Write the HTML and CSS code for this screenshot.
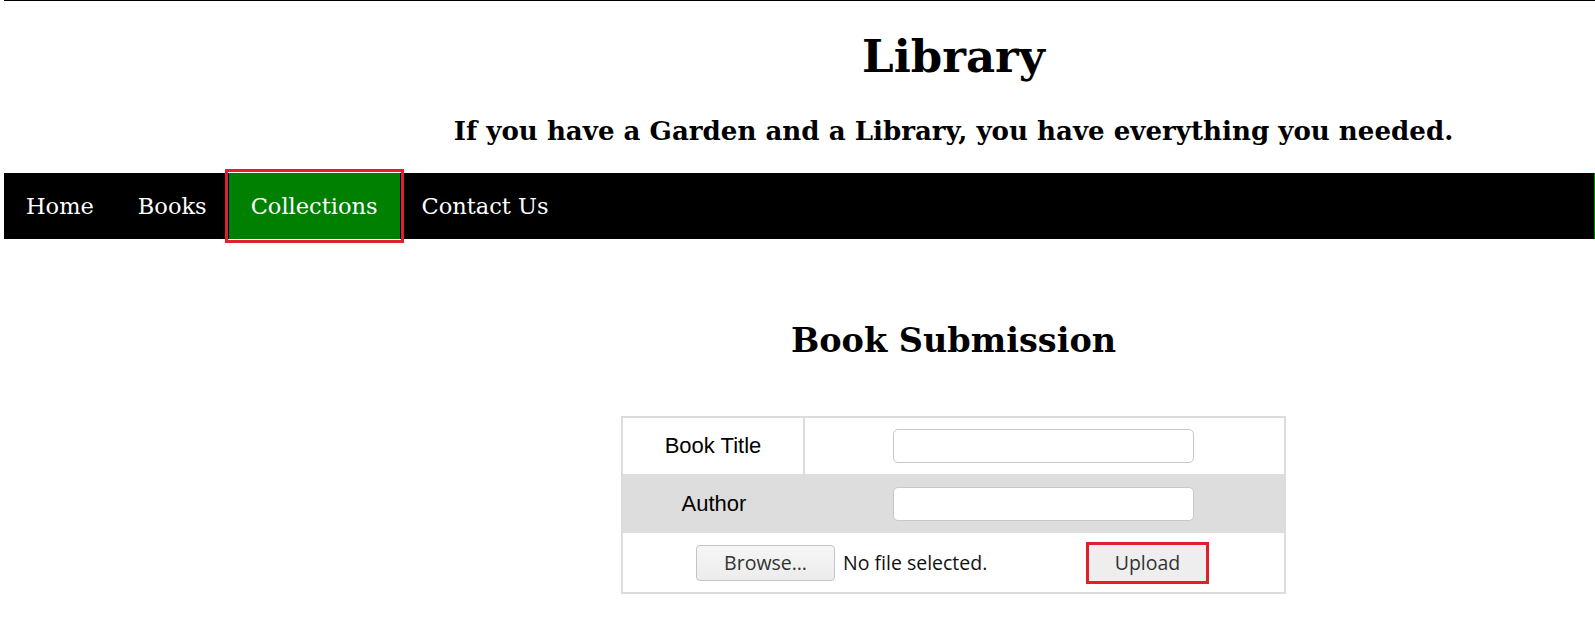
FILE: index.html
```html
<!DOCTYPE html>
<html lang="en">
<head>
<meta charset="utf-8">
<title>Library</title>
<link rel="stylesheet" href="styles.css">
</head>
<body>
<div class="topline"></div>
<header class="header">
  <h1 class="title">Library</h1>
  <h3 class="subtitle">If you have a Garden and a Library, you have everything you needed.</h3>
</header>
<nav class="nav">
  <a class="nav-item" href="#">Home</a>
  <a class="nav-item" href="#">Books</a>
  <a class="nav-item active" href="#">Collections</a>
  <a class="nav-item" href="#">Contact Us</a>
</nav>
<main class="main">
  <h2 class="section-title">Book Submission</h2>
  <form class="form-table">
    <div class="cell label first">Book Title</div>
    <div class="cell field"><input class="text-input" type="text"></div>
    <div class="cell label shaded">Author</div>
    <div class="cell field shaded"><input class="text-input" type="text"></div>
    <div class="cell file-row">
      <span class="file-widget">
        <button type="button" class="browse">Browse…</button>
        <span class="file-label">No file selected.</span>
      </span>
      <button type="button" class="upload">Upload</button>
    </div>
  </form>
</main>
</body>
</html>
```

FILE: styles.css
```css
html, body {
  background: #fff;
}
body {
  margin: 0 0 0 4px;
  font-family: "DejaVu Serif", serif;
  color: #000;
}
.topline {
  margin-left: -4px;
  border-top: 1px solid #000;
}
.header {
  padding-left: 308px;
  text-align: center;
}
.title {
  margin: 29px 0 0;
  font-size: 45px;
  line-height: 54px;
  font-weight: bold;
}
.subtitle {
  margin: 32px 0 0;
  font-size: 26.1px;
  line-height: 30px;
  font-weight: bold;
}
.nav {
  margin-top: 27px;
  height: 66px;
  background: #000;
  border-right: 1px solid #008000;
  display: flex;
}
.nav-item {
  display: block;
  padding: 0 22px;
  line-height: 66px;
  font-size: 22.5px;
  color: #fff;
  text-decoration: none;
}
.nav-item.active {
  background: #008000;
  outline: 3px solid #e2202c;
  outline-offset: 1px;
  position: relative;
}
.main {
  padding-left: 308px;
  text-align: center;
}
.section-title {
  margin: 82px 0 0;
  font-size: 33.5px;
  line-height: 40px;
  font-weight: bold;
}
.form-table {
  margin: 55px auto 0;
  width: 665px;
  box-sizing: border-box;
  border: 2px solid #dcdcdc;
  display: grid;
  grid-template-columns: 182px 1fr;
  grid-template-rows: 56px 59px 59px;
}
.cell {
  display: flex;
  align-items: center;
  justify-content: center;
  font-family: "Liberation Sans", Arial, sans-serif;
  font-size: 22px;
}
.first {
  border-right: 2px solid #dcdcdc;
}
.shaded {
  background: #dddddd;
}
.text-input {
  width: 301px;
  height: 34px;
  box-sizing: border-box;
  border: 1px solid #c8c8c8;
  border-radius: 5px;
  background: #fff;
  margin: 0 0 0 -2px;
}
.file-row {
  grid-column: 1 / 3;
  gap: 5px;
  padding-right: 5px;
}
.file-widget {
  display: flex;
  align-items: center;
  width: 388px;
}
.browse {
  width: 139px;
  height: 36px;
  box-sizing: border-box;
  border: 1px solid #c4c4c4;
  border-radius: 4px;
  background: linear-gradient(#f6f6f6, #ececec);
  font-family: "Open Sans", sans-serif;
  font-size: 19.5px;
  color: #333;
  padding: 0;
}
.file-label {
  margin-left: 8px;
  font-family: "Open Sans", sans-serif;
  font-size: 19.5px;
  color: #111;
}
.upload {
  width: 117px;
  height: 36px;
  box-sizing: border-box;
  border: none;
  background: #eeeeee;
  font-family: "Open Sans", sans-serif;
  font-size: 19.5px;
  color: #333;
  padding: 0;
  outline: 3px solid #e2202c;
}
```
